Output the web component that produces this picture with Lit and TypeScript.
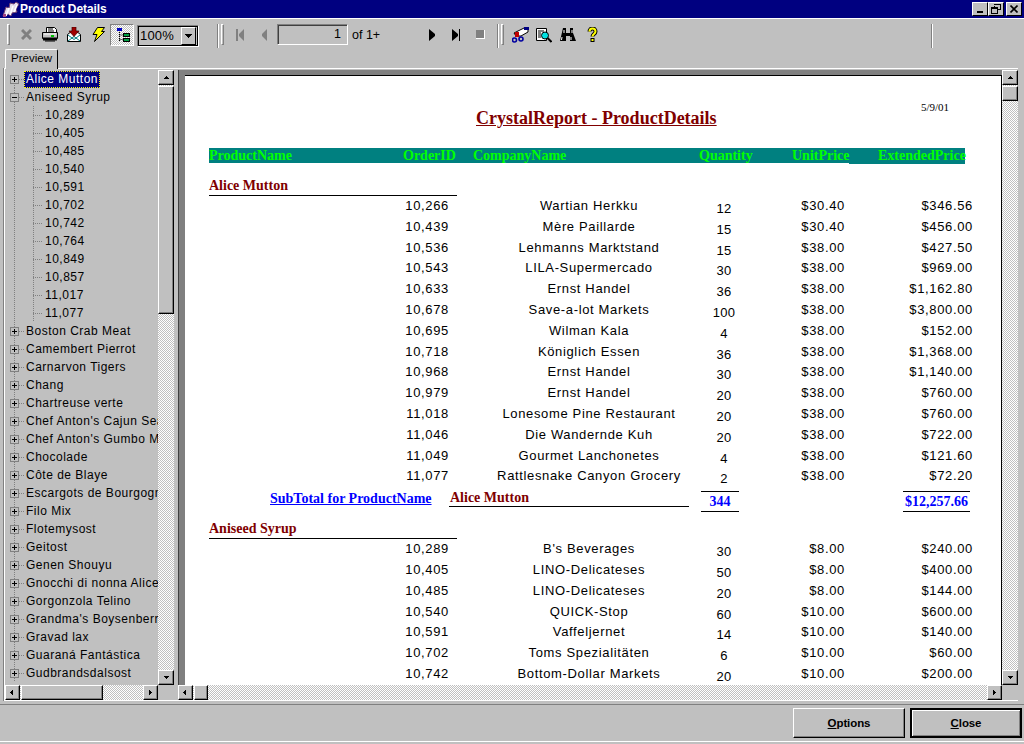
import {css, html, LitElement, svg} from "lit";
import {customElement} from "lit/decorators.js";

const sales1 = [
	["10,266", "Wartian Herkku", "12", "$30.40", "$346.56"],
	["10,439", "Mère Paillarde", "15", "$30.40", "$456.00"],
	["10,536", "Lehmanns Marktstand", "15", "$38.00", "$427.50"],
	["10,543", "LILA-Supermercado", "30", "$38.00", "$969.00"],
	["10,633", "Ernst Handel", "36", "$38.00", "$1,162.80"],
	["10,678", "Save-a-lot Markets", "100", "$38.00", "$3,800.00"],
	["10,695", "Wilman Kala", "4", "$38.00", "$152.00"],
	["10,718", "Königlich Essen", "36", "$38.00", "$1,368.00"],
	["10,968", "Ernst Handel", "30", "$38.00", "$1,140.00"],
	["10,979", "Ernst Handel", "20", "$38.00", "$760.00"],
	["11,018", "Lonesome Pine Restaurant", "20", "$38.00", "$760.00"],
	["11,046", "Die Wandernde Kuh", "20", "$38.00", "$722.00"],
	["11,049", "Gourmet Lanchonetes", "4", "$38.00", "$121.60"],
	["11,077", "Rattlesnake Canyon Grocery", "2", "$38.00", "$72.20"],
];
const sales2 = [
	["10,289", "B's Beverages", "30", "$8.00", "$240.00"],
	["10,405", "LINO-Delicateses", "50", "$8.00", "$400.00"],
	["10,485", "LINO-Delicateses", "20", "$8.00", "$144.00"],
	["10,540", "QUICK-Stop", "60", "$10.00", "$600.00"],
	["10,591", "Vaffeljernet", "14", "$10.00", "$140.00"],
	["10,702", "Toms Spezialitäten", "6", "$10.00", "$60.00"],
	["10,742", "Bottom-Dollar Markets", "20", "$10.00", "$200.00"],
];
const orders = ["10,289", "10,405", "10,485", "10,540", "10,591", "10,702", "10,742", "10,764", "10,849", "10,857", "11,017", "11,077"];
const products = [
	"Boston Crab Meat", "Camembert Pierrot", "Carnarvon Tigers", "Chang", "Chartreuse verte",
	"Chef Anton's Cajun Seasoning", "Chef Anton's Gumbo Mix", "Chocolade", "Côte de Blaye",
	"Escargots de Bourgogne", "Filo Mix", "Flotemysost", "Geitost", "Genen Shouyu",
	"Gnocchi di nonna Alice", "Gorgonzola Telino", "Grandma's Boysenberry Spread", "Gravad lax",
	"Guaraná Fantástica", "Gudbrandsdalsost",
];

const icon = (w: number, h: number, body: unknown) => html`
	<svg width=${w} height=${h} viewBox="0 0 ${w} ${h}">${body}</svg>`;

const icons = {
	logo: icon(18, 16, svg`
		<path d="M1 15l3-9 3 1 1-5 4 1 2-2 3 2-3 5 1 3-5 1-1 3-3-2z" fill="#e4dcec" stroke="#704070"/>
		<path d="M4 15l3-8M8 14l3-9M12 11l3-7" stroke="#fff" stroke-width="1.5" fill="none"/>
		<path d="M1 13h3v3h-3z" fill="#a04080"/>`),
	cancel: icon(11, 11, svg`<path d="M1 1l9 9M10 1l-9 9" stroke="#808080" stroke-width="3"/>`),
	print: icon(16, 15, svg`
		<path d="M4.500.5h8l2 2v3h-10z" fill="#fff" stroke="#000"/>
		<path d="M.5 5.500h15v6h-15z" fill="#c0c0c0" stroke="#000"/>
		<path d="M6 2h5M6 4h6" stroke="#000"/>
		<path d="M2 7h12" stroke="#fff" stroke-width="1"/>
		<path d="M1 10.500h14v3h-14z" fill="#000"/>
		<path d="M3 13.500h10v1h-10z" fill="#000"/>
		<path d="M9 8h3v2h-3z" fill="#00c000"/>`),
	exportTo: icon(14, 15, svg`
		<path d="M.5 7.500l6.500-5 6.500 5v7h-13z" fill="#fff" stroke="#000"/>
		<path d="M1 14l6-4.500 6 4.500M1 8l6 4.500 6-4.500" stroke="#008080" fill="none"/>
		<path d="M5 0h4v4h3l-5 5.500-5-5.500h3z" fill="#a00000" stroke="#400000" stroke-width=".7"/>`),
	bolt: icon(13, 15, svg`
		<path d="M5.500.5h7l-3 4h3l-10 10 2.500-7h-4z" fill="#ffff00" stroke="#000"/>`),
	tree: icon(15, 14, svg`
		<path d="M2 0h5v3h-5z" fill="#0000c0"/>
		<path d="M4.500 4v9M4.500 7h3M4.500 11.500h3" stroke="#000" stroke-dasharray="1 1"/>
		<path d="M8 5h7v4h-7zM8 10h7v4h-7z" fill="#000"/>
		<path d="M9 6h5v2h-5zM9 11h5v2h-5z" fill="#00a040"/>`),
	first: icon(9, 12, svg`<path d="M0 0h2v12h-2zM8 0v12l-5-5v-2z" fill="#808080"/>`),
	prev: icon(7, 12, svg`<path d="M6 0v12l-5-5v-2z" fill="#808080"/>`),
	next: icon(7, 12, svg`<path d="M0 0v12l6-5v-2z" fill="#000"/>`),
	last: icon(9, 12, svg`<path d="M0 0v12l6-5v-2zM7 0h1v12h-1z" fill="#000"/>`),
	stop: icon(9, 9, svg`<path d="M0 0h8v8h-8z" fill="#808080"/><path d="M0 8.500h9M8.500 0v9" stroke="#fff"/>`),
	group: icon(17, 16, svg`
		<path d="M2 6l10-5h4v4l-7 4h-5z" fill="#fff" stroke="#000"/>
		<path d="M3 5h4v5h-4z" fill="#c00000"/>
		<path d="M12 0h5v3h-5z" fill="#000080"/>
		<circle cx="2.500" cy="13" r="2" fill="#c0c0c0" stroke="#0000a0" stroke-width="1.600"/>
		<circle cx="9" cy="12" r="2" fill="#c0c0c0" stroke="#0000a0" stroke-width="1.600"/>`),
	preview: icon(16, 16, svg`
		<path d="M.5 1.500h10v12h-10z" fill="#fff" stroke="#000"/>
		<path d="M2 4h6M2 6h3M2 8h3M2 10h3" stroke="#000"/>
		<circle cx="9" cy="8.500" r="3.500" fill="#00e0e0" stroke="#000"/>
		<path d="M11.500 11l4 4" stroke="#000" stroke-width="2"/>`),
	find: icon(16, 15, svg`
		<path d="M3 1h3v5h4v-5h3v5l3 8h-6v-5h-4v5h-6z" fill="#000"/>
		<path d="M4 3v3M12 3v3M2 10l-.5 3M11 10v3" stroke="#fff"/>`),
	help: icon(11, 15, svg`
		<path d="M2.500 4.500c0-4 6-4 6 0 0 2.500-3 2.500-3 5" fill="none" stroke="#000" stroke-width="4"/>
		<path d="M2.500 4.500c0-4 6-4 6 0 0 2.500-3 2.500-3 5" fill="none" stroke="#ffff00" stroke-width="2"/>
		<path d="M3.500 11h4v4h-4z" fill="#000"/>
		<path d="M4.500 12h2v2h-2z" fill="#ffff00"/>`),
};

/**
 * Crystal report viewer window
 */
@customElement("app-root")
export default class AppRoot extends LitElement {
	static styles = css`
		:host {
			display: block;
			width: 1024px;
			height: 744px;
			background: #c0c0c0;
			font-family: "Liberation Sans", sans-serif;
			font-size: 12px;
			color: #000;
			overflow: hidden;
		}

		.window { display: flex; flex-direction: column; height: 744px; }

		.titlebar {
			height: 18px;
			flex: none;
			background: #000080;
			color: #fff;
			font-weight: bold;
			display: flex;
			align-items: center;
			padding: 0 2px;
			letter-spacing: -0.1px;
		}
		.titlebar .name { flex: 1; }
		.caps { display: flex; }
		.cap {
			width: 16px;
			height: 14px;
			box-sizing: border-box;
			background: #c0c0c0;
			border: 1px solid;
			border-color: #fff #000 #000 #fff;
			display: flex;
			align-items: center;
			justify-content: center;
		}
		.cap.close { margin-left: 2px; }

		.toolbar {
			height: 29px;
			flex: none;
			box-sizing: border-box;
			border-top: 1px solid #fff;
			display: flex;
			align-items: center;
			padding: 3px 0 0 7px;
		}
		.grip {
			width: 1px;
			height: 24px;
			margin-top: 3px;
			flex: none;
			background: #808080;
			border-right: 1px solid #fff;
		}
		.bar {
			width: 1px;
			height: 19px;
			flex: none;
			border: 1px solid;
			border-color: #fff #808080 #808080 #fff;
			margin-right: 4px;
		}
		.grip + .bar { margin-left: 2px; }
		.grip.mid { margin-left: 18px; }
		.grip.nav { margin-left: 5px; }
		.grip.end { margin-left: 327px; }
		.tool {
			width: 24px;
			height: 22px;
			flex: none;
			display: flex;
			align-items: center;
			justify-content: center;
		}
		.tool.on {
			box-sizing: border-box;
			border: 1px solid;
			border-color: #808080 #fff #fff #808080;
			background: repeating-conic-gradient(#fff 0 25%, #c0c0c0 0 50%) 0 0 / 2px 2px;
		}
		.combo {
			width: 62px;
			height: 22px;
			flex: none;
			box-sizing: border-box;
			margin: 2px 0 0 3px;
			border: 1px solid;
			border-color: #808080 #fff #fff #808080;
			box-shadow: inset 1px 1px 0 #000, inset -1px -1px 0 #000;
			display: flex;
			align-items: center;
			font-size: 13px;
			letter-spacing: 0.2px;
			padding: 0 2px 0 2px;
		}
		.combo span { flex: 1; }
		.combo .drop {
			flex: none;
			width: 15px;
			height: 18px;
			box-sizing: border-box;
			background: #c0c0c0;
			border: 1px solid;
			border-color: #fff #000 #000 #fff;
			display: flex;
			align-items: center;
			justify-content: center;
		}
		.page-box {
			width: 71px;
			height: 21px;
			flex: none;
			box-sizing: border-box;
			border: 1px solid;
			border-color: #808080 #fff #fff #808080;
			box-shadow: inset 1px 1px 0 #404040;
			text-align: right;
			line-height: 19px;
			padding-right: 6px;
			font-size: 12.5px;
			margin-left: 1px;
		}
		.of { width: 68px; flex: none; margin-left: 4px; font-size: 12.5px; }

		.tabs { height: 21px; flex: none; display: flex; align-items: flex-end; padding-left: 5px; }
		.tab {
			width: 53px;
			height: 20px;
			box-sizing: border-box;
			border: 1px solid;
			border-bottom: 0;
			border-color: #fff #000 #000 #fff;
			border-radius: 2px 2px 0 0;
			text-align: center;
			font-size: 11.5px;
			line-height: 16px;
			position: relative;
			top: 1px;
			background: #c0c0c0;
		}

		.panel {
			height: 633px;
			flex: none;
			box-sizing: border-box;
			margin: 0 6px 0 4px;
			border-left: 1px solid #fff;
			box-shadow: -1px 0 0 #808080;
			border-top: 1px solid #fff;
			border-bottom: 1px solid #fff;
			padding-top: 1px;
			display: flex;
			gap: 4px;
		}

		.tree-pane { width: 169px; flex: none; display: grid; grid-template: 1fr 15px / 153px 16px; min-height: 0; }
		.tree-list { overflow: hidden; min-height: 0; }
		.row {
			height: 18px;
			display: flex;
			align-items: center;
			white-space: nowrap;
			letter-spacing: 0.5px;
			background: repeating-linear-gradient(to bottom, #808080 0 1px, transparent 1px 2px) 9px 0 / 1px 100% no-repeat;
		}
		.row.child {
			padding-left: 28px;
			background-position: 9px 0, 28px 0;
			background-image:
				repeating-linear-gradient(to bottom, #808080 0 1px, transparent 1px 2px),
				repeating-linear-gradient(to bottom, #808080 0 1px, transparent 1px 2px);
			background-size: 1px 100%, 1px 100%;
			background-repeat: no-repeat;
		}
		.row:first-child { background-position: 9px 9px; }
		.box {
			width: 9px;
			height: 9px;
			box-sizing: border-box;
			margin-left: 5px;
			border: 1px solid #808080;
			background: #c0c0c0;
			display: flex;
			flex: none;
			align-items: center;
			justify-content: center;
		}
		.dash {
			width: 5px;
			height: 1px;
			flex: none;
			background: repeating-linear-gradient(to right, #808080 0 1px, transparent 1px 2px);
		}
		.child .dash { width: 10px; }
		.label { padding: 1px 2px; line-height: 15px; box-sizing: border-box; }
		.label.selected {
			background: #000080;
			color: #fff;
			outline: 1px dotted #ffff00;
			outline-offset: -1px;
		}

		.viewer { flex: 1; display: grid; grid-template: 1fr 15px / 1fr 16px; min-width: 0; min-height: 0; }
		.paper-wrap {
			min-height: 0;
			overflow: hidden;
			background: #808080;
			padding: 5px 0 0 6px;
			border-left: 1px solid #404040;
		}
		.paper {
			height: 100%;
			background: #fff;
			border-top: 1px solid #000;
			border-right: 1px solid #000;
			padding-left: 24px;
			overflow: hidden;
			box-sizing: border-box;
		}

		.head { display: flex; align-items: flex-start; height: 72px; font-family: "Liberation Serif", serif; }
		.title {
			margin: 33px 0 0 267px;
			font-size: 18px;
			line-height: 18px;
			font-weight: bold;
			color: #800000;
			text-decoration: underline;
			white-space: nowrap;
			width: 241px;
		}
		.date { margin: 25px 0 0 204px; font-size: 11px; line-height: 12px; }

		.cols {
			width: 756px;
			height: 16px;
			display: grid;
			grid-template-columns: 194px 70px 226px 93px 86px 87px;
			background:
				linear-gradient(#008080, #008080) 0 0 / 640px 15px no-repeat,
				linear-gradient(#008080, #008080) 640px 0 / 116px 16px no-repeat;
			color: #00ff00;
			font: bold 14px/16px "Liberation Serif", serif;
			white-space: nowrap;
		}

		.group {
			width: 248px;
			height: 19px;
			box-sizing: border-box;
			margin-top: 13px;
			padding-top: 1px;
			border-bottom: 1px solid #000;
			color: #800000;
			font: bold 14px/16px "Liberation Serif", serif;
		}
		.group.next { margin-top: 3px; }

		.sale {
			height: 20.8px;
			display: grid;
			grid-template-columns: 240px 40px 200px 70px 86px 128px;
			line-height: 20px;
			font-size: 13px;
			letter-spacing: 0.65px;
			white-space: nowrap;
		}
		.sale .id { text-align: right; grid-column: 1; }
		.sale .co { text-align: center; grid-column: 3; }
		.sale .qty { text-align: center; grid-column: 4; padding-top: 3px; letter-spacing: 0.3px; }
		.sale .num { text-align: right; }

		.subtotal {
			height: 30px;
			display: flex;
			align-items: flex-start;
			font: bold 14px/16px "Liberation Serif", serif;
			white-space: nowrap;
		}
		.subtotal .for { margin: 4px 0 0 61px; width: 162px; color: #0000ff; text-decoration: underline; }
		.subtotal .who {
			margin: 3px 0 0 17px;
			width: 240px;
			height: 17px;
			box-sizing: border-box;
			padding-left: 1px;
			color: #800000;
			border-bottom: 1px solid #000;
		}
		.subtotal .sum {
			margin-top: 4px;
			height: 21px;
			box-sizing: border-box;
			border-top: 1px solid #000;
			border-bottom: 1px solid #000;
			color: #0000ff;
			text-align: center;
			line-height: 19px;
		}
		.sum.qty { margin-left: 12px; width: 38px; }
		.sum.ext { margin-left: 164px; width: 67px; }

		.sb { display: flex; background: repeating-conic-gradient(#fff 0 25%, #c0c0c0 0 50%) 0 0 / 2px 2px; min-width: 0; min-height: 0; }
		.sb.v { flex-direction: column; }
		.sb-btn, .sb-thumb {
			flex: none;
			box-sizing: border-box;
			background: #c0c0c0;
			border: 1px solid;
			border-color: #fff #000 #000 #fff;
			box-shadow: inset -1px -1px 0 #808080;
		}
		.sb-btn { display: flex; align-items: center; justify-content: center; }
		.sb.v .sb-btn { height: 15px; }
		.sb.h .sb-btn { width: 15px; }
		.sb-gap { flex: 1; }
		.corner { background: #c0c0c0; }

		.actions-wrap { flex: none; height: 41px; border-bottom: 1px solid #fff; display: flex; box-sizing: border-box; }
		.actions {
			flex: 1;
			border-top: 1px solid #808080;
			margin-top: 3px;
			display: flex;
			justify-content: flex-end;
			align-items: flex-start;
			padding: 3px 2px 0 0;
			gap: 5px;
		}
		.btn {
			width: 112px;
			height: 30px;
			box-sizing: border-box;
			border: 1px solid;
			border-color: #fff #000 #000 #fff;
			box-shadow: inset -1px -1px 0 #808080;
			font-weight: bold;
			font-size: 11.5px;
			letter-spacing: -0.1px;
			display: flex;
			align-items: center;
			justify-content: center;
		}
		.btn.default { border: 2px solid #000; box-shadow: inset 1px 1px 0 #fff, inset -1px -1px 0 #808080; }
		u { text-decoration: underline; }
	`;

	private scrollbar(dir: "v" | "h", thumbStart: number, thumbSize: number) {
		const style = dir === "v"
			? `height:${thumbSize}px;margin-top:${thumbStart}px`
			: `width:${thumbSize}px;margin-left:${thumbStart}px`;
		const tri = (p: string) => html`<svg width="7" height="7" viewBox="0 0 7 7" shape-rendering="crispEdges"><path d=${p} fill="#000"/></svg>`;
		const back = dir === "v" ? "M3 2h1v1h1v1h1v1h-5v-1h1v-1h1z" : "M4 1v5h-1v-1h-1v-1h-1v-1h1v-1h1v-1z";
		const fwd = dir === "v" ? "M1 2h5v1h-1v1h-1v1h-1v-1h-1v-1h-1z" : "M2 1v5h1v-1h1v-1h1v-1h-1v-1h-1v-1z";
		return html`
			<div class="sb ${dir}">
				<div class="sb-btn">${tri(back)}</div>
				<div class="sb-thumb" style=${style}></div>
				<div class="sb-gap"></div>
				<div class="sb-btn">${tri(fwd)}</div>
			</div>`;
	}

	private sale(r: string[]) {
		return html`
			<div class="sale">
				<div class="id">${r[0]}</div>
				<div class="co">${r[1]}</div>
				<div class="qty">${r[2]}</div>
				<div class="num">${r[3]}</div>
				<div class="num">${r[4]}</div>
			</div>`;
	}

	private node(name: string, open = false, selected = false) {
		const mark = open ? "M1 3.500h5" : "M1 3.500h5M3.500 1v5";
		return html`
			<div class="row">
				<div class="box">
					<svg width="7" height="7" viewBox="0 0 7 7" shape-rendering="crispEdges"><path d=${mark} stroke="#000" fill="none"/></svg>
				</div>
				<div class="dash"></div>
				<div class="label ${selected ? "selected" : ""}">${name}</div>
			</div>`;
	}

	render() {
		const dropArrow = html`<svg width="7" height="4" viewBox="0 0 7 4" shape-rendering="crispEdges"><path d="M0 0h7v1h-1v1h-1v1h-1v1h-1v-1h-1v-1h-1v-1h-1z" fill="#000"/></svg>`;
		return html`
			<div class="window">
				<div class="titlebar">
					${icons.logo}
					<div class="name">Product Details</div>
					<div class="caps">
						<div class="cap"><svg width="8" height="8" shape-rendering="crispEdges"><path d="M1 6h6v2h-6z"/></svg></div>
						<div class="cap"><svg width="10" height="10" shape-rendering="crispEdges"><path d="M3 .5h6v5h-2M3 1.500v2M.5 3.500h6v6h-6zM1 4.500h5" stroke="#000" fill="none"/></svg></div>
						<div class="cap close"><svg width="8" height="8" viewBox="0 0 8 8"><path d="M.5.5l7 7M7.500.5l-7 7" stroke="#000" stroke-width="1.600"/></svg></div>
					</div>
				</div>

				<div class="toolbar">
					<div class="bar"></div>
					<div class="tool">${icons.cancel}</div>
					<div class="tool">${icons.print}</div>
					<div class="tool">${icons.exportTo}</div>
					<div class="tool">${icons.bolt}</div>
					<div class="tool on">${icons.tree}</div>
					<div class="combo"><span>100%</span><div class="drop">${dropArrow}</div></div>
					<div class="grip mid"></div><div class="bar"></div>
					<div class="tool">${icons.first}</div>
					<div class="tool">${icons.prev}</div>
					<div class="page-box">1</div>
					<div class="of">of 1+</div>
					<div class="tool">${icons.next}</div>
					<div class="tool">${icons.last}</div>
					<div class="tool">${icons.stop}</div>
					<div class="grip nav"></div><div class="bar"></div>
					<div class="tool">${icons.group}</div>
					<div class="tool">${icons.preview}</div>
					<div class="tool">${icons.find}</div>
					<div class="tool">${icons.help}</div>
					<div class="grip end"></div>
				</div>

				<div class="tabs"><div class="tab">Preview</div></div>

				<div class="panel">
					<div class="tree-pane">
						<div class="tree-list">
							${this.node("Alice Mutton", false, true)}
							${this.node("Aniseed Syrup", true)}
							${orders.map(o => html`
								<div class="row child"><div class="dash"></div><div class="label">${o}</div></div>`)}
							${products.map(p => this.node(p))}
						</div>
						${this.scrollbar("v", 1, 228)}
						${this.scrollbar("h", 1, 82)}
						<div class="corner"></div>
					</div>

					<div class="viewer">
						<div class="paper-wrap">
							<div class="paper">
								<div class="head">
									<div class="title">CrystalReport - ProductDetails</div>
									<div class="date">5/9/01</div>
								</div>
								<div class="cols">
									<div>ProductName</div>
									<div>OrderID</div>
									<div>CompanyName</div>
									<div>Quantity</div>
									<div>UnitPrice</div>
									<div>ExtendedPrice</div>
								</div>
								<div class="group">Alice Mutton</div>
								${sales1.map(r => this.sale(r))}
								<div class="subtotal">
									<div class="for">SubTotal for ProductName</div>
									<div class="who">Alice Mutton</div>
									<div class="sum qty">344</div>
									<div class="sum ext">$12,257.66</div>
								</div>
								<div class="group next">Aniseed Syrup</div>
								${sales2.map(r => this.sale(r))}
							</div>
						</div>
						${this.scrollbar("v", 1, 15)}
						${this.scrollbar("h", 1, 14)}
						<div class="corner"></div>
					</div>
				</div>

				<div class="actions-wrap">
					<div class="actions">
						<div class="btn"><span><u>O</u>ptions</span></div>
						<div class="btn default"><span><u>C</u>lose</span></div>
					</div>
				</div>
			</div>
		`;
	}
}

declare global {
	interface HTMLElementTagNameMap {
		"app-root": AppRoot;
	}
}
